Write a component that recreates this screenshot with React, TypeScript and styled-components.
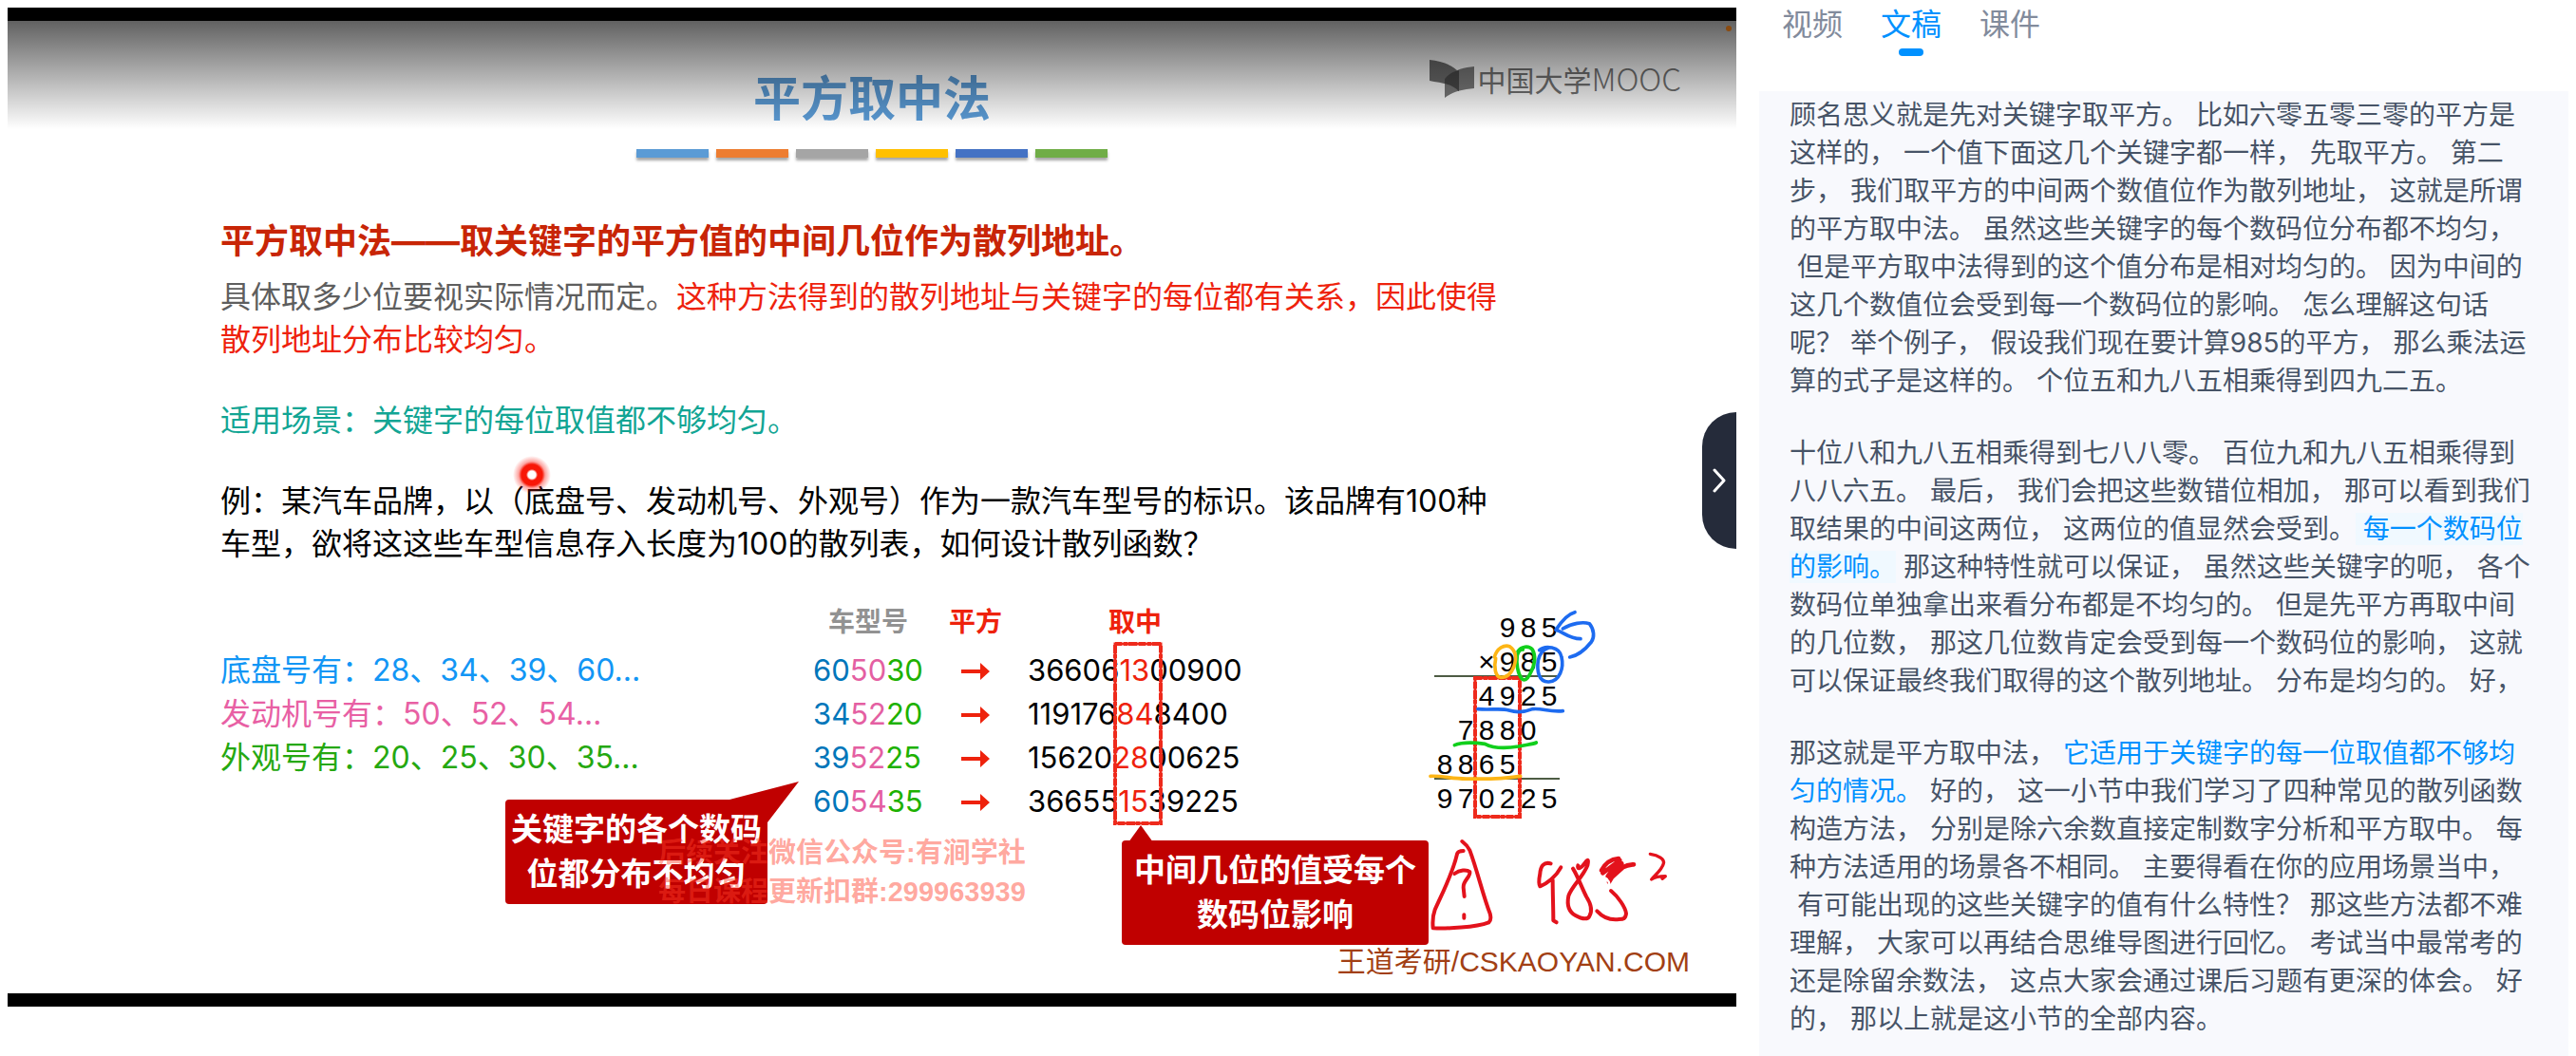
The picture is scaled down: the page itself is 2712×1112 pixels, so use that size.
import React, { Fragment, useState } from "react";
import styled, { createGlobalStyle } from "styled-components";

const GlobalStyle = createGlobalStyle`
  * { box-sizing: border-box; }
  body {
    margin: 0;
    background: #fff;
    font-family: Inter, "Noto Sans CJK SC", sans-serif;
  }
`;

const Page = styled.div`
  display: grid;
  grid-template-columns: minmax(0, 1fr) 852px;
  column-gap: 24px;
  height: 100vh;
  padding: 0 8px;
  overflow: hidden;
`;

/* ---------- video side ---------- */

const Stage = styled.main`
  display: flex;
  flex-direction: column;
  justify-content: space-between;
  min-width: 0;
  padding-top: 8px;
`;

const Video = styled.section`
  position: relative;
  border: solid #000;
  border-width: 14px 0;
`;

const Slide = styled.article`
  position: relative;
  height: 1024px;
  padding-top: 52px;
  background: #fff;
  overflow: hidden;
`;

const TopShade = styled.div`
  position: absolute;
  inset: 0 0 auto;
  height: 114px;
  background: linear-gradient(rgba(0, 0, 0, 0.62), rgba(0, 0, 0, 0));
  pointer-events: none;
`;

const Title = styled.h1`
  margin: 0;
  font-size: 50px;
  line-height: 60px;
  font-weight: 700;
  text-align: center;
  color: #5b9bd5;
`;

const Stripes = styled.div`
  display: flex;
  justify-content: center;
  gap: 8px;
  margin-top: 23px;
`;

const Stripe = styled.span<{ $color: string }>`
  width: 76px;
  height: 9px;
  background: ${(p) => p.$color};
  box-shadow: 0 3px 3px rgba(0, 0, 0, 0.35);
`;

const Logo = styled.div`
  position: absolute;
  top: 36px;
  right: 58px;
  display: flex;
  align-items: center;
  gap: 2px;
  color: #747474;
  font-size: 30px;
  line-height: 48px;
  font-weight: 400;
  font-family: "Noto Sans CJK SC", sans-serif;
`;

const LogoLatin = styled.span`
  font-size: 33px;
  font-weight: 300;
`;

const Body = styled.div`
  padding: 64px 0 0 224px;
`;

const Lead = styled.h2`
  margin: 0 0 12px;
  font-size: 36px;
  line-height: 48px;
  font-weight: 700;
  color: #c82506;
`;

const Text = styled.p<{ $color: string }>`
  margin: 0 0 40px;
  max-width: 1360px;
  font-size: 32px;
  line-height: 45px;
  color: ${(p) => p.$color};
`;

const Accent = styled.span`
  color: #ee220c;
`;

const Example = styled.div`
  display: grid;
  grid-template-columns: 624px 452px 1fr;
  align-items: start;
`;

const Ranges = styled.ul`
  list-style: none;
  margin: 0;
  padding: 48px 0 0;
`;

const Range = styled.li<{ $color: string }>`
  font-size: 32px;
  line-height: 46px;
  color: ${(p) => p.$color};
`;

const Squares = styled.table`
  border-collapse: collapse;
  table-layout: fixed;
  width: 452px;
`;

const Head = styled.th<{ $color: string; $width: number }>`
  width: ${(p) => p.$width}px;
  height: 48px;
  padding: 0 0 8px;
  font-size: 28px;
  line-height: 40px;
  font-weight: 700;
  color: ${(p) => p.$color};
`;

const Cell = styled.td<{ $align?: string }>`
  height: 46px;
  padding: 0;
  font-size: 31px;
  line-height: 46px;
  text-align: ${(p) => p.$align ?? "left"};
  color: #000;
  white-space: nowrap;
`;

const Digits = styled.span<{ $color: string }>`
  color: ${(p) => p.$color};
`;

const Product = styled.div`
  display: flex;
  flex-direction: column;
  width: 132px;
  margin: 8px 0 0 202px;
  font-family: "Liberation Sans", Arial, sans-serif;
  font-size: 30px;
  line-height: 36px;
`;

const ProductRow = styled.div<{ $shift?: number }>`
  display: flex;
  justify-content: flex-end;
  height: 36px;
  padding-right: ${(p) => (p.$shift ?? 0) * 22}px;
`;

const Digit = styled.span`
  width: 22px;
  text-align: center;
`;

const Rule = styled.hr`
  width: 100%;
  height: 2px;
  margin: -4px 0 2px;
  border: 0;
  background: #4d5c44;
`;

const Callout = styled.div<{ $x: number; $y: number; $width: number }>`
  position: absolute;
  left: ${(p) => p.$x}px;
  top: ${(p) => p.$y}px;
  width: ${(p) => p.$width}px;
  padding: 8px 4px;
  border-radius: 4px;
  background: #c00000;
  color: #fff;
  font-size: 33px;
  line-height: 47px;
  font-weight: 700;
  text-align: center;
`;

const Overlay = styled.svg<{ $x: number; $y: number }>`
  position: absolute;
  left: ${(p) => p.$x}px;
  top: ${(p) => p.$y}px;
  overflow: visible;
  pointer-events: none;
`;

const Watermark = styled.div`
  position: absolute;
  left: 685px;
  top: 856px;
  font-family: "Liberation Sans", "Noto Sans CJK SC", sans-serif;
  font-size: 29px;
  line-height: 41px;
  font-weight: 700;
  color: rgba(255, 60, 40, 0.45);
  white-space: nowrap;
`;

const Credit = styled.div`
  position: absolute;
  right: 49px;
  bottom: 12px;
  font-family: "Liberation Sans", "Noto Sans CJK SC", sans-serif;
  font-size: 30px;
  line-height: 42px;
  color: #a23f14;
`;

const Laser = styled.span`
  position: absolute;
  left: 532px;
  top: 458px;
  width: 40px;
  height: 40px;
  border-radius: 50%;
  background: radial-gradient(
    circle,
    #fff 0 4px,
    #f81808 6px 11px,
    rgba(250, 30, 20, 0.4) 14px,
    rgba(250, 30, 20, 0) 20px
  );
`;

const RecordDot = styled.span`
  position: absolute;
  right: 5px;
  top: 5px;
  width: 6px;
  height: 6px;
  border-radius: 50%;
  background: #8a4b10;
`;

const Collapse = styled.button`
  position: absolute;
  right: 0;
  top: 412px;
  display: flex;
  align-items: center;
  justify-content: center;
  width: 36px;
  height: 144px;
  padding: 0;
  border: 0;
  border-radius: 36px 0 0 36px;
  background: #252b3a;
  cursor: pointer;
`;

const Drawer = styled.div`
  align-self: flex-end;
  width: 388px;
  height: 4px;
  margin-right: 16px;
  border-radius: 8px 8px 0 0;
  background: #f7f7f8;
`;

/* ---------- transcript side ---------- */

const Side = styled.aside`
  display: flex;
  flex-direction: column;
  min-width: 0;
`;

const Tabs = styled.div`
  display: flex;
  gap: 40px;
  height: 96px;
  padding: 4px 24px 0;
`;

const Tab = styled.button<{ $active: boolean }>`
  display: flex;
  flex-direction: column;
  align-items: center;
  gap: 4px;
  padding: 0;
  border: 0;
  background: none;
  font-family: inherit;
  font-size: 32px;
  line-height: 43px;
  color: ${(p) => (p.$active ? "#0091ff" : "#828b9c")};
  cursor: pointer;

  &::after {
    content: "";
    width: 26px;
    height: 8px;
    border-radius: 4px;
    background: ${(p) => (p.$active ? "#0091ff" : "transparent")};
  }
`;

const Transcript = styled.div`
  flex: 1;
  padding: 5px 32px;
  background: #f8f9fd;
  overflow: hidden;
`;

const Paragraph = styled.p`
  margin: 0 0 36px;
  font-size: 28px;
  line-height: 40px;
  color: #475467;
`;

const Sentence = styled.span<{ $mark?: "current" | "link" }>`
  color: ${(p) => (p.$mark ? "#0091ff" : "inherit")};
  background: ${(p) => (p.$mark === "current" ? "#f0f9ff" : "transparent")};
`;

type Mark = "current" | "link";
type Piece = string | [string, Mark];

const transcript: Piece[][] = [
  [
    "顾名思义就是先对关键字取平方。",
    "比如六零五零三零的平方是这样的，",
    "一个值下面这几个关键字都一样，",
    "先取平方。",
    "第二步，",
    "我们取平方的中间两个数值位作为散列地址，",
    "这就是所谓的平方取中法。",
    "虽然这些关键字的每个数码位分布都不均匀，",
    "但是平方取中法得到的这个值分布是相对均匀的。",
    "因为中间的这几个数值位会受到每一个数码位的影响。",
    "怎么理解这句话呢？",
    "举个例子，",
    "假设我们现在要计算985的平方，",
    "那么乘法运算的式子是这样的。",
    "个位五和九八五相乘得到四九二五。",
  ],
  [
    "十位八和九八五相乘得到七八八零。",
    "百位九和九八五相乘得到八八六五。",
    "最后，",
    "我们会把这些数错位相加，",
    "那可以看到我们取结果的中间这两位，",
    "这两位的值显然会受到。",
    ["每一个数码位的影响。", "current"],
    "那这种特性就可以保证，",
    "虽然这些关键字的呃，",
    "各个数码位单独拿出来看分布都是不均匀的。",
    "但是先平方再取中间的几位数，",
    "那这几位数肯定会受到每一个数码位的影响，",
    "这就可以保证最终我们取得的这个散列地址。",
    "分布是均匀的。",
    "好，",
  ],
  [
    "那这就是平方取中法，",
    ["它适用于关键字的每一位取值都不够均匀的情况。", "link"],
    "好的，",
    "这一小节中我们学习了四种常见的散列函数构造方法，",
    "分别是除六余数直接定制数字分析和平方取中。",
    "每种方法适用的场景各不相同。",
    "主要得看在你的应用场景当中，",
    "有可能出现的这些关键字的值有什么特性？",
    "那这些方法都不难理解，",
    "大家可以再结合思维导图进行回忆。",
    "考试当中最常考的还是除留余数法，",
    "这点大家会通过课后习题有更深的体会。",
    "好的，",
    "那以上就是这小节的全部内容。",
  ],
];

const stripes = ["#5b9bd5", "#ed7d31", "#a5a5a5", "#ffc000", "#4472c4", "#70ad47"];

const models = [
  { parts: ["60", "50", "30"], square: ["36606", "13", "00900"] },
  { parts: ["34", "52", "20"], square: ["119176", "84", "8400"] },
  { parts: ["39", "52", "25"], square: ["15620", "28", "00625"] },
  { parts: ["60", "54", "35"], square: ["36655", "15", "39225"] },
];
const partColors = ["#0076ba", "#e45fa2", "#1db100"];

function ProductLine({ value, shift }: { value: string; shift?: number }) {
  return (
    <ProductRow $shift={shift}>
      {value.split("").map((c, i) => (
        <Digit key={i}>{c}</Digit>
      ))}
    </ProductRow>
  );
}

function RoughBox({ x, y, w, h }: { x: number; y: number; w: number; h: number }) {
  return (
    <Overlay $x={x} $y={y} width={w} height={h} fill="none" stroke="#ee2a1c">
      <rect x="2" y="2" width={w - 4} height={h - 4} strokeWidth="3" />
      <rect x="2" y="2" width={w - 4} height={h - 4} strokeWidth="4" strokeDasharray="7 2 4 1 9 2" />
    </Overlay>
  );
}

function LogoMark() {
  return (
    <svg width="48" height="40" viewBox="0 0 48 40" aria-hidden="true">
      <path d="M0 0C13 1 25 6 31 13V33C22 24 9 24 0 22Z" fill="#6e6e6e" />
      <path d="M16 40V20C24 11 36 8 47 7V30C34 31 24 34 16 40Z" fill="#7c7c7c" />
      <path d="M16 20C21 14 26 12 31 11V33C27 29 21 26 16 25Z" fill="#4a4a4a" />
    </svg>
  );
}

function Strokes() {
  return (
    <>
      <Overlay $x={1432} $y={608} width="300" height="240" viewBox="0 0 900 720" fill="none" strokeLinecap="round" strokeLinejoin="round" strokeWidth="11">
        <g stroke="#1d6bf0">
          <path d="M654 44C630 50 612 72 594 100C618 106 634 128 672 128" />
          <path d="M616 96C644 78 680 74 700 80C716 100 716 124 706 138C690 158 670 180 638 186" />
          <path d="M542 164C560 148 606 152 612 186C620 220 606 262 572 264C538 266 534 226 538 196C542 176 556 160 572 156" />
          <path d="M348 350C390 354 420 346 446 354C472 362 500 358 520 350C550 346 570 360 616 356" />
        </g>
        <g stroke="#11cf1c">
          <path d="M474 168C484 152 508 148 520 162C532 184 526 214 512 240C504 256 494 262 486 254C474 238 468 206 472 180C476 166 484 160 490 162" />
          <path d="M274 464C304 452 340 456 370 460C400 476 440 474 476 468C500 462 520 462 532 456" />
        </g>
        <g stroke="#fdb515">
          <path d="M400 186C408 158 430 146 448 152C468 166 470 190 462 214C452 242 436 250 420 250C402 248 398 216 404 190" />
          <path d="M198 562C240 560 270 572 320 570C380 572 440 568 482 562" />
        </g>
      </Overlay>
      <Overlay $x={1482} $y={848} width="300" height="170" viewBox="0 0 900 510" fill="none" stroke="#e3121c" strokeLinecap="round" strokeLinejoin="round" strokeWidth="12">
        <path d="M152 78C140 78 134 80 132 88C118 150 84 214 62 264C56 280 54 300 56 322C100 324 190 320 232 304C242 296 238 286 236 276C214 220 196 140 172 76C164 60 156 54 148 48" />
        <path d="M124 150C140 138 162 136 172 144C176 160 150 172 152 194L155 222M154 280V290" />
        <path d="M428 118C406 112 396 126 394 150C390 170 390 184 394 190C416 182 444 160 460 130M434 170C434 210 436 260 436 298L446 304" />
        <path d="M514 124C510 138 524 134 536 116C546 102 548 106 544 124C530 160 494 190 484 220C478 250 484 270 506 282C530 296 546 294 550 284C562 264 554 244 540 222C524 190 514 160 498 134" />
        <path d="M588 140C600 116 620 104 642 102M592 148L646 108L608 158L652 118L616 166L656 130C670 122 680 122 690 121M622 160L612 176" strokeWidth="14" />
        <path d="M618 204C640 222 664 256 666 276C664 292 658 294 644 294C614 298 594 290 574 268" />
        <path d="M742 88C768 92 788 104 784 118C780 136 760 152 746 168C760 158 776 158 790 158L780 166" strokeWidth="10" />
        <path d="M604 166C616 178 616 190 606 202" stroke="#fff" strokeWidth="7" />
      </Overlay>
    </>
  );
}

const tabs = ["视频", "文稿", "课件"];

export default function App() {
  const [active, setActive] = useState("文稿");
  return (
    <Page lang="zh-CN">
      <GlobalStyle />
      <Stage>
        <Video>
          <Slide>
            <Title>平方取中法</Title>
            <Stripes>
              {stripes.map((c) => (
                <Stripe key={c} $color={c} />
              ))}
            </Stripes>
            <Body>
              <Lead>平方取中法——取关键字的平方值的中间几位作为散列地址。</Lead>
              <Text $color="#5e5e5e">
                具体取多少位要视实际情况而定。
                <Accent>这种方法得到的散列地址与关键字的每位都有关系，因此使得散列地址分布比较均匀。</Accent>
              </Text>
              <Text $color="#12a594">适用场景：关键字的每位取值都不够均匀。</Text>
              <Text $color="#000">
                例：某汽车品牌，以（底盘号、发动机号、外观号）作为一款汽车型号的标识。该品牌有100种
                <br />
                车型，欲将这这些车型信息存入长度为100的散列表，如何设计散列函数？
              </Text>
              <Example>
                <Ranges>
                  <Range $color="#1296f5">底盘号有：28、34、39、60...</Range>
                  <Range $color="#e860a4">发动机号有：50、52、54…</Range>
                  <Range $color="#25a810">外观号有：20、25、30、35...</Range>
                </Ranges>
                <Squares>
                  <thead>
                    <tr>
                      <Head $color="#929292" $width={116}>车型号</Head>
                      <Head $color="#ee220c" $width={110}>平方</Head>
                      <Head $color="#ee220c" $width={226}>取中</Head>
                    </tr>
                  </thead>
                  <tbody>
                    {models.map((m) => (
                      <tr key={m.parts.join("")}>
                        <Cell>
                          {m.parts.map((p, i) => (
                            <Digits key={i} $color={partColors[i]}>{p}</Digits>
                          ))}
                        </Cell>
                        <Cell $align="center">
                          <svg width="30" height="20" viewBox="0 0 30 20" role="img" aria-label="平方">
                            <path d="M0 8H20V1L30 10L20 19V12H0Z" fill="#ee220c" />
                          </svg>
                        </Cell>
                        <Cell>
                          {m.square[0]}
                          <Digits $color="#ee220c">{m.square[1]}</Digits>
                          {m.square[2]}
                        </Cell>
                      </tr>
                    ))}
                  </tbody>
                </Squares>
                <Product>
                  <ProductLine value="985" />
                  <ProductLine value="×985" />
                  <Rule />
                  <ProductLine value="4925" />
                  <ProductLine value="7880" shift={1} />
                  <ProductLine value="8865" shift={2} />
                  <Rule />
                  <ProductLine value="970225" />
                </Product>
              </Example>
            </Body>

            <RoughBox x={1164} y={654} w={52} h={193} />
            <RoughBox x={1543} y={690} w={51} h={150} />

            <Overlay $x={524} $y={800} width="310" height="60" fill="#c00000">
              <path d="M236 20L309 1L276 44V26Z" />
            </Overlay>
            <Callout $x={524} $y={820} $width={276}>
              关键字的各个数码
              <br />
              位都分布不均匀
            </Callout>
            <Overlay $x={1180} $y={847} width="26" height="18" fill="#c00000">
              <path d="M0 18L13 0L26 18Z" />
            </Overlay>
            <Callout $x={1173} $y={863} $width={323}>
              中间几位的值受每个
              <br />
              数码位影响
            </Callout>
            <Watermark>
              后续关注微信公众号:有涧学社
              <br />
              每日课程更新扣群:299963939
            </Watermark>
            <Strokes />
            <Laser />
            <Credit>王道考研/CSKAOYAN.COM</Credit>
            <Logo>
              <LogoMark />
              <span>
                中国大学<LogoLatin>MOOC</LogoLatin>
              </span>
            </Logo>
            <TopShade />
            <RecordDot />
          </Slide>
          <Collapse aria-label="收起侧栏">
            <svg width="14" height="26" viewBox="0 0 14 26" fill="none" stroke="#fff" strokeWidth="3" strokeLinecap="round" strokeLinejoin="round">
              <path d="M2 2L12 13L2 24" />
            </svg>
          </Collapse>
        </Video>
        <Drawer />
      </Stage>

      <Side>
        <Tabs role="tablist">
          {tabs.map((t) => (
            <Tab key={t} role="tab" aria-selected={t === active} $active={t === active} onClick={() => setActive(t)}>
              {t}
            </Tab>
          ))}
        </Tabs>
        <Transcript>
          {transcript.map((pieces, i) => (
            <Paragraph key={i}>
              {pieces.map((piece, j) => {
                const [text, mark] = typeof piece === "string" ? [piece, undefined] : piece;
                return (
                  <Fragment key={j}>
                    {j > 0 && <wbr />}
                    <Sentence $mark={mark}>{(j > 0 ? "\u00a0" : "") + text}</Sentence>
                  </Fragment>
                );
              })}
            </Paragraph>
          ))}
        </Transcript>
      </Side>
    </Page>
  );
}
